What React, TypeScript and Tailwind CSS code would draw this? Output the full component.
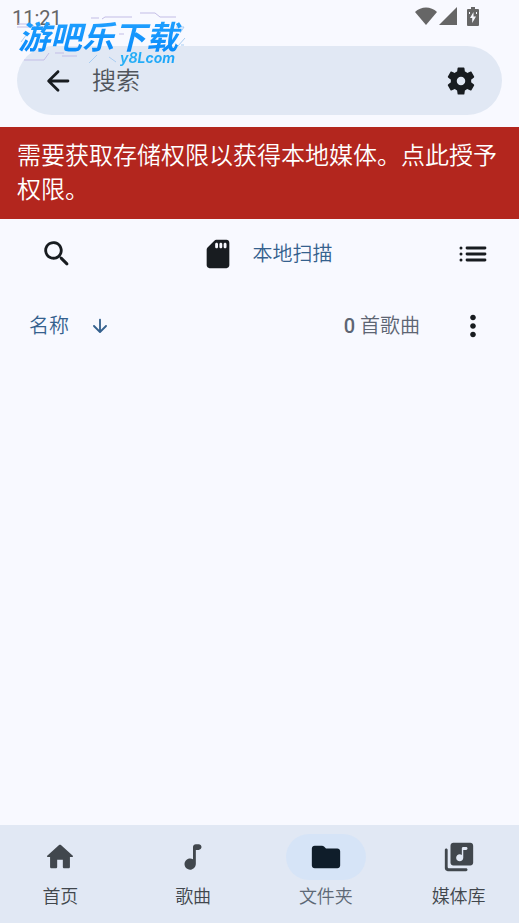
import type { ReactNode } from "react";
import clsx from "clsx";

const Icon = ({ children, className }: { children: ReactNode; className?: string }) => (
  <svg viewBox="0 0 24 24" fill="currentColor" aria-hidden="true" className={clsx("shrink-0", className)}>
    {children}
  </svg>
);

const StatusBar = () => (
  <div className="h-9 flex items-center justify-between pl-3 pr-10 text-[#666666]">
    <span className="text-xl font-normal">11:21</span>
    <div className="flex items-center h-9 pb-1">
      <svg viewBox="0 0 22 18" fill="currentColor" className="w-[22px] h-[18px]">
        <path d="M11 18 0 5C6-1 16-1 22 5Z" />
      </svg>
      <svg viewBox="0 0 18 18" fill="currentColor" className="w-[18px] h-[18px] ml-0.5">
        <path d="M18 0v18H0Z" />
      </svg>
      <svg viewBox="0 0 12 19" fill="currentColor" fillRule="evenodd" className="w-3 h-[19px] ml-[10px]">
        <path d="M4 0h4v2h3q1 0 1 1v15q0 1-1 1H1q-1 0-1-1V3q0-1 1-1h3ZM6.500 5 3 11h2.200v5L9 9.500H6.500ZM2 5v2h1V5ZM9 5v2h1V5Z" />
      </svg>
    </div>
  </div>
);

const Watermark = () => (
  <div className="absolute left-4 top-3 w-44 h-14 pointer-events-none">
    <svg viewBox="0 0 176 56" fill="none" stroke="#c3bde6" strokeWidth="1" className="absolute inset-0 w-full h-full">
      <path d="M2 12h13l4 3h10M1 15h12M75 6h8M86 7l3-2h27M124 1h15l5 4h16M103 22h5M39 41h9M46 44h15M8 48h20l5-7" />
      <path d="M5 30l6-8M73 51l8-8M93 45l7 5M162 34l7-8M160 15h8l-4 6M165 33h3" stroke="#a9cdf2" />
    </svg>
    <span className="absolute left-0.5 top-2 text-[32px] leading-9 font-bold italic whitespace-nowrap pr-2 bg-linear-to-b from-[#20a0ff] to-[#0589fa] bg-clip-text text-transparent">
      游吧乐下载
    </span>
    <span className="absolute left-[104px] top-9 text-sm leading-5 font-bold italic font-['Inter'] bg-linear-to-r from-[#28b0f5] to-[#1da5fa] bg-clip-text text-transparent">
      y8Lcom
    </span>
  </div>
);

const tabs = [
  {
    name: "首页",
    icon: <path d="M10 19v-5h4v5c0 .55.45 1 1 1h3c.55 0 1-.45 1-1v-7h1.700c.46 0 .68-.57.33-.87L12.670 3.600c-.38-.34-.96-.34-1.340 0l-8.360 7.530c-.34.3-.13.870.33.870H5v7c0 .55.45 1 1 1h3c.55 0 1-.45 1-1z" />,
  },
  {
    name: "歌曲",
    icon: <path d="M12 5v8.550c-.94-.54-2.100-.75-3.330-.32-1.340.48-2.370 1.670-2.610 3.070-.46 2.740 1.860 5.080 4.590 4.650 1.960-.31 3.350-2.110 3.350-4.100V7h2c1.100 0 2-.9 2-2s-.9-2-2-2h-2c-1.100 0-2 .9-2 2z" />,
  },
  {
    name: "文件夹",
    icon: <path d="M10.590 4.590C10.210 4.210 9.700 4 9.170 4H4c-1.100 0-1.990.9-1.990 2L2 18c0 1.100.9 2 2 2h16c1.100 0 2-.9 2-2V8c0-1.100-.9-2-2-2h-8l-1.410-1.410z" />,
    active: true,
  },
  {
    name: "媒体库",
    icon: (
      <path d="M20 2H8c-1.100 0-2 .9-2 2v12c0 1.100.9 2 2 2h12c1.100 0 2-.9 2-2V4c0-1.100-.9-2-2-2zm-3 5h-2v5.500c0 1.380-1.120 2.500-2.500 2.500S10 13.880 10 12.500s1.120-2.500 2.500-2.500c.57 0 1.080.19 1.500.51V6c0-.55.45-1 1-1h2c.55 0 1 .45 1 1s-.45 1-1 1zM3 6c-.55 0-1 .45-1 1v13c0 1.100.9 2 2 2h13c.55 0 1-.45 1-1s-.45-1-1-1H5c-.55 0-1-.45-1-1V7c0-.55-.45-1-1-1z" />
    ),
  },
];

const App = () => {
  return (
    <div className="relative min-h-screen flex flex-col bg-[#f8f9ff] text-[#181c20] font-[350] font-['Roboto','Noto_Sans_CJK_SC',sans-serif]">
      <StatusBar />
      <header className="mx-[17px] mt-[10px] h-[69px] px-6 flex items-center rounded-full bg-[#e1e8f4]">
        <button aria-label="返回">
          <Icon className="w-[34px] h-[34px]">
            <path d="M19 11H7.830l4.880-4.880c.39-.39.39-1.030 0-1.420-.39-.39-1.020-.39-1.410 0l-6.590 6.590c-.39.39-.39 1.020 0 1.410l6.590 6.590c.39.39 1.020.39 1.410 0 .39-.39.39-1.020 0-1.410L7.830 13H19c.55 0 1-.45 1-1s-.45-1-1-1z" />
          </Icon>
        </button>
        <input
          type="text"
          aria-label="搜索"
          placeholder="搜索"
          className="flex-1 min-w-0 ml-[17px] text-2xl bg-transparent outline-none placeholder:text-[#50555c]"
        />
        <button aria-label="设置">
          <Icon className="w-[34px] h-[34px]">
            <path d="M19.140 12.940c.04-.3.06-.61.06-.94 0-.32-.02-.64-.07-.94l2.030-1.580c.18-.14.23-.41.12-.61l-1.920-3.320c-.12-.22-.37-.29-.59-.22l-2.390.96c-.5-.38-1.030-.7-1.620-.94l-.36-2.540c-.04-.24-.24-.41-.48-.41h-3.840c-.24 0-.43.17-.47.41l-.36 2.540c-.59.24-1.130.57-1.620.94l-2.390-.96c-.22-.08-.47 0-.59.22L2.740 8.870c-.12.21-.08.47.12.61l2.030 1.580c-.05.3-.09.63-.09.94s.02.64.07.94l-2.030 1.580c-.18.14-.23.41-.12.61l1.920 3.320c.12.22.37.29.59.22l2.390-.96c.5.38 1.030.7 1.620.94l.36 2.540c.05.24.24.41.48.41h3.840c.24 0 .44-.17.47-.41l.36-2.540c.59-.24 1.130-.56 1.620-.94l2.390.96c.22.08.47 0 .59-.22l1.920-3.320c.12-.22.07-.47-.12-.61l-2.010-1.580zM12 15c-1.650 0-3-1.350-3-3s1.350-3 3-3 3 1.350 3 3-1.350 3-3 3z" />
          </Icon>
        </button>
      </header>
      <Watermark />

      <button className="mt-3 px-[17px] py-3 text-left text-2xl leading-[34px] text-white bg-[#b3261e]">
        需要获取存储权限以获得本地媒体。点此授予权限。
      </button>

      <main className="flex-1">
        <div className="h-[69px] pl-10 pr-8 flex items-center">
          <button aria-label="查找">
            <Icon className="w-[34px] h-[34px]">
              <path d="M15.500 14h-.79l-.28-.27c1.200-1.400 1.820-3.310 1.480-5.340-.47-2.780-2.790-5-5.590-5.340-4.230-.52-7.780 3.040-7.270 7.270.34 2.800 2.560 5.120 5.340 5.590 2.030.34 3.940-.28 5.340-1.480l.27.28v.79l4.250 4.250c.41.41 1.080.41 1.490 0 .41-.41.41-1.080 0-1.490L15.500 14zm-6 0C7.010 14 5 11.990 5 9.500S7.010 5 9.500 5 14 7.010 14 9.500 11.990 14 9.500 14z" />
            </Icon>
          </button>
          <button className="flex-1 flex items-center justify-center gap-[18px] text-xl text-[#35618e]">
            <Icon className="w-[34px] h-[34px] text-[#181c20]">
              <path d="M18 2h-7.170c-.53 0-1.040.21-1.420.59L4.600 7.420c-.37.370-.6.880-.6 1.400V20c0 1.100.9 2 2 2h12c1.100 0 2-.9 2-2V4c0-1.100-.9-2-2-2zm-7 6c-.55 0-1-.45-1-1V5c0-.55.45-1 1-1s1 .45 1 1v2c0 .55-.45 1-1 1zm3 0c-.55 0-1-.45-1-1V5c0-.55.45-1 1-1s1 .45 1 1v2c0 .55-.45 1-1 1zm3 0c-.55 0-1-.45-1-1V5c0-.55.45-1 1-1s1 .45 1 1v2c0 .55-.45 1-1 1z" />
            </Icon>
            本地扫描
          </button>
          <button aria-label="列表">
            <svg viewBox="0 0 28 16" fill="currentColor" className="w-7 h-4">
              <circle cx="2" cy="2" r="1.500" />
              <circle cx="2" cy="8" r="1.500" />
              <circle cx="2" cy="14" r="1.500" />
              <path d="M8 2h18M8 8h18M8 14h18" stroke="currentColor" strokeWidth="2.800" strokeLinecap="round" />
            </svg>
          </button>
        </div>
        <div className="h-[76px] px-[29px] flex items-center text-xl">
          <button className="flex items-center gap-5 text-[#35618e]">
            名称
            <Icon className="w-[22px] h-[22px]">
              <path d="M11 5v11.170l-4.880-4.880c-.39-.39-1.030-.39-1.420 0-.39.39-.39 1.020 0 1.410l6.590 6.590c.39.39 1.020.39 1.410 0l6.590-6.590c.39-.39.39-1.020 0-1.410-.39-.39-1.020-.39-1.410 0L13 16.170V5c0-.55-.45-1-1-1s-1 .45-1 1z" />
            </Icon>
          </button>
          <span className="ml-auto text-[#5d6573]"><b className="font-medium">0</b> 首歌曲</span>
          <button aria-label="更多" className="ml-9">
            <Icon className="w-[34px] h-[34px]">
              <path d="M12 8c1.100 0 2-.9 2-2s-.9-2-2-2-2 .9-2 2 .9 2 2 2zm0 2c-1.100 0-2 .9-2 2s.9 2 2 2 2-.9 2-2-.9-2-2-2zm0 6c-1.100 0-2 .9-2 2s.9 2 2 2 2-.9 2-2-.9-2-2-2z" />
            </Icon>
          </button>
        </div>
      </main>

      <nav className="h-[98px] grid grid-cols-4 gap-3 bg-[#e1e8f4] text-[#41474d]">
        {tabs.map((tab) => (
          <button key={tab.name} className="flex flex-col items-center pt-[9px]">
            <span className={clsx("w-20 h-[46px] rounded-full flex items-center justify-center", tab.active && "bg-[#d6e4f7] text-[#0f1d2a]")}>
              <Icon className="w-[34px] h-[34px]">{tab.icon}</Icon>
            </span>
            <span className={clsx("mt-[3px] text-lg leading-7", tab.active && "text-[#5d6876]")}>{tab.name}</span>
          </button>
        ))}
      </nav>
    </div>
  );
};
export default App;
